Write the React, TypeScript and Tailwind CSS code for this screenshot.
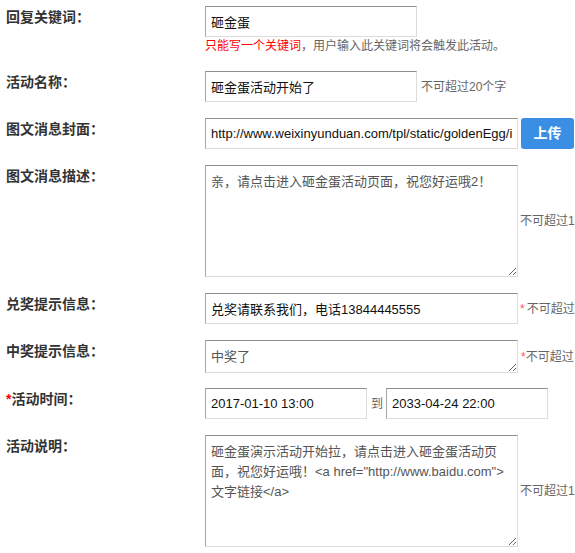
import React from "react";

const font = { fontFamily: '"Liberation Sans", "Noto Sans CJK SC", sans-serif' };

const box =
  "box-border border border-t-[#8f8f8f] border-l-[#a6a6a6] border-r-[#dcdcdc] border-b-[#dcdcdc] bg-white text-[13px] outline-none";

function Label({ children, star }: { children: React.ReactNode; star?: boolean }) {
  return (
    <div className="w-[205px] shrink-0 pl-[6px] text-[14px] font-bold leading-[22px] text-[#333]">
      {star && <span className="text-[#ff0000]">*</span>}
      {children}
    </div>
  );
}

function Note({ children, className = "" }: { children: React.ReactNode; className?: string }) {
  return <span className={`whitespace-nowrap text-[12px] text-[#666] ${className}`}>{children}</span>;
}

export default function App() {
  return (
    <div className="w-[575px] h-[553px] overflow-hidden bg-white pt-[6px]" style={font}>
      {/* 回复关键词 */}
      <div className="flex mb-[16px]">
        <Label>回复关键词：</Label>
        <div className="flex flex-col">
          <input className={`${box} w-[212px] h-[31px] px-[5px] text-[#111]`} defaultValue="砸金蛋" />
          <div className="text-[12px] leading-[18px] whitespace-nowrap text-[#666]">
            <span className="text-[#ff0000]">只能写一个关键词</span>，用户输入此关键词将会触发此活动。
          </div>
        </div>
      </div>

      {/* 活动名称 */}
      <div className="flex mb-[16px]">
        <Label>活动名称：</Label>
        <div className="flex items-center">
          <input className={`${box} w-[212px] h-[31px] px-[5px] text-[#111]`} defaultValue="砸金蛋活动开始了" />
          <Note className="ml-[4px]">不可超过20个字</Note>
        </div>
      </div>

      {/* 图文消息封面 */}
      <div className="flex mb-[16px]">
        <Label>图文消息封面：</Label>
        <div className="flex items-center">
          <input
            className={`${box} w-[313px] h-[31px] px-[5px] text-[#111]`}
            defaultValue="http://www.weixinyunduan.com/tpl/static/goldenEgg/images/cover.jpg"
          />
          <button className="ml-[3px] w-[53px] h-[31px] rounded-[3px] bg-[#3a8ee4] text-white text-[14px] font-bold">
            上传
          </button>
        </div>
      </div>

      {/* 图文消息描述 */}
      <div className="flex mb-[16px]">
        <Label>图文消息描述：</Label>
        <div className="flex items-center">
          <textarea
            className={`${box} w-[313px] h-[112px] pl-[5px] pr-[9px] pt-[6px] leading-[20px] text-[#555]`}
            defaultValue="亲，请点击进入砸金蛋活动页面，祝您好运哦2！"
          />
          <Note className="ml-[2px]">不可超过1</Note>
        </div>
      </div>

      {/* 兑奖提示信息 */}
      <div className="flex mb-[16px]">
        <Label>兑奖提示信息：</Label>
        <div className="flex items-center">
          <input
            className={`${box} w-[313px] h-[31px] px-[5px] text-[#111]`}
            defaultValue="兑奖请联系我们，电话13844445555"
          />
          <Note className="ml-[2px]">
            <span className="text-[#ff5555] mr-[2px]">*</span>不可超过
          </Note>
        </div>
      </div>

      {/* 中奖提示信息 */}
      <div className="flex mb-[15px]">
        <Label>中奖提示信息：</Label>
        <div className="flex items-center">
          <textarea
            className={`${box} w-[313px] h-[33px] px-[5px] pt-[6px] leading-[20px] text-[#555]`}
            defaultValue="中奖了"
          />
          <Note className="ml-[3px]">
            <span className="text-[#ff5555]">*</span>不可超过
          </Note>
        </div>
      </div>

      {/* 活动时间 */}
      <div className="flex mb-[16px]">
        <Label star>活动时间：</Label>
        <div className="flex items-center">
          <input className={`${box} w-[162px] h-[31px] px-[5px] text-[#111]`} defaultValue="2017-01-10 13:00" />
          <span className="ml-[4px] mr-[3px] text-[12px] text-[#666]">到</span>
          <input className={`${box} w-[162px] h-[31px] px-[5px] text-[#111]`} defaultValue="2033-04-24 22:00" />
        </div>
      </div>

      {/* 活动说明 */}
      <div className="flex">
        <Label>活动说明：</Label>
        <div className="flex items-center">
          <textarea
            className={`${box} w-[313px] h-[112px] pl-[5px] pr-[9px] pt-[6px] leading-[20px] text-[#555]`}
            defaultValue={'砸金蛋演示活动开始拉，请点击进入砸金蛋活动页面，祝您好运哦！<a href="http://www.baidu.com">文字链接</a>'}
          />
          <Note className="ml-[2px]">不可超过1</Note>
        </div>
      </div>
    </div>
  );
}
